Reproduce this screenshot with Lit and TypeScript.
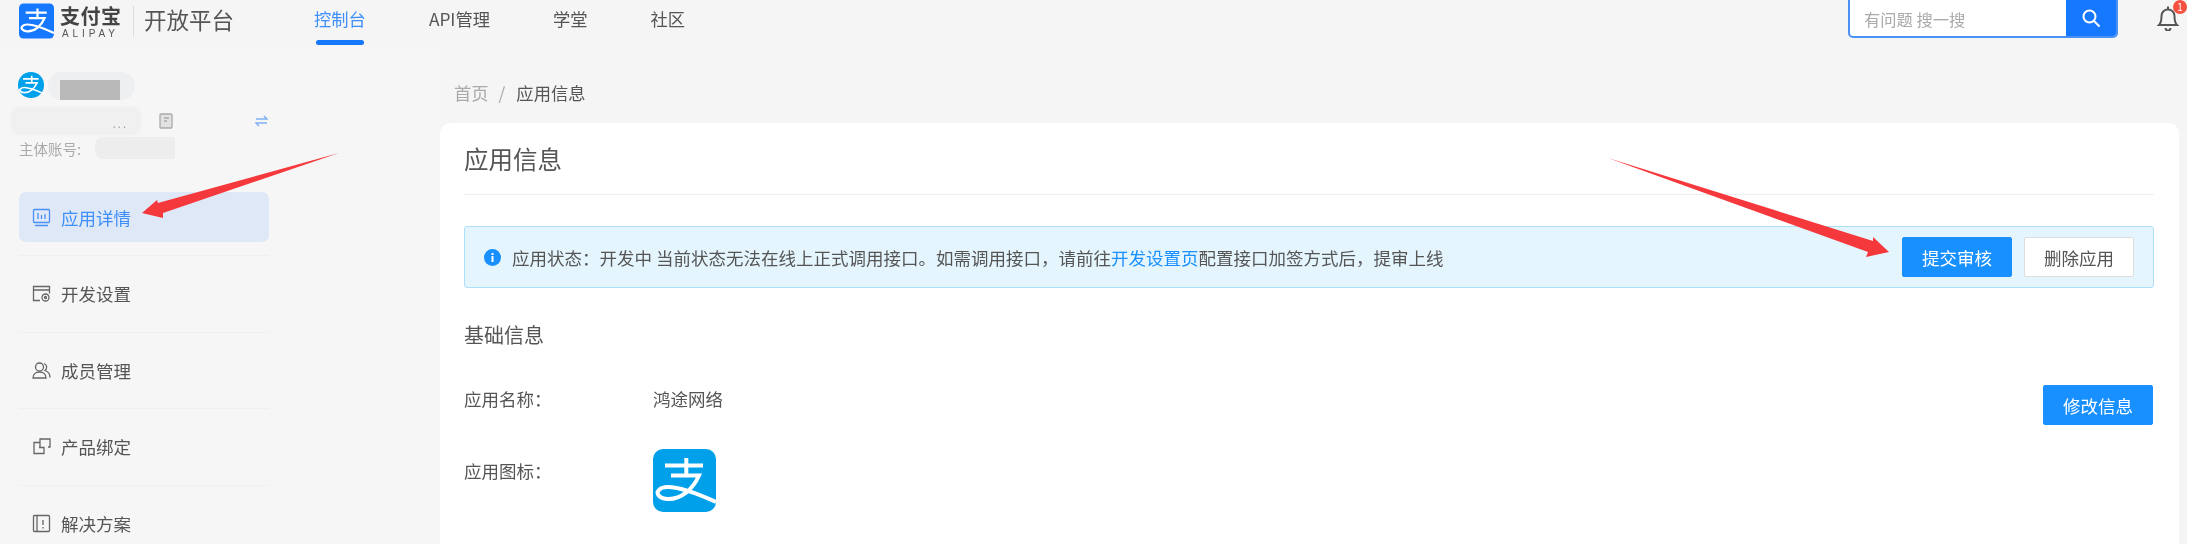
import { LitElement, html, css, svg } from "lit";
import { customElement } from "lit/decorators.js";

const zhi = (bg: string, fg = "#fff", r = 10) => html`<svg viewBox="0 0 63 63" class="fill">
  <rect width="63" height="63" rx="${r}" fill="${bg}"></rect>
  <path d="M33.3 9V26M12 16.5H50M18 26.5H46C40 40 28 51 14 50C5 49 3 44 6 41C11 35 30 38 63 53" fill="none" stroke="${fg}" stroke-width="4"></path>
</svg>`;

const icons: Record<string, unknown> = {
  detail: svg`<rect x="1.5" y="1.5" width="16" height="13" rx="1"/><path d="M6 5v6M9.5 7v4M13 6v5M3 17.5h13"/>`,
  dev: svg`<path d="M8 16.5H1.5v-14h16v7M1.5 6h16"/><circle cx="13.5" cy="13.5" r="3.5"/><circle cx="13.5" cy="13.5" r="1"/>`,
  member: svg`<circle cx="7.5" cy="6" r="4"/><path d="M1 17c0-4 3-6 6.5-6s6.5 2 6.5 6zM12 2.5a4 4 0 0 1 1 7c3 1 5 3.5 5 7"/>`,
  product: svg`<path d="M8 5.5H2v11h10v-6H7M8 10V2h10v8h-2"/>`,
  solution: svg`<rect x="1.5" y="1.5" width="16" height="16" rx="1"/><path d="M5 1.5v16M11 6v5M11 13v1.5"/>`,
};

const menu = [
  ["detail", "应用详情"],
  ["dev", "开发设置"],
  ["member", "成员管理"],
  ["product", "产品绑定"],
  ["solution", "解决方案"],
];

@customElement("app-root")
export class AppRoot extends LitElement {
  static styles = css`
    :host {
      display: block;
      height: 544px;
      overflow: hidden;
      position: relative;
      background: #f5f5f5;
      font-family: "Noto Sans CJK SC", "Liberation Sans", sans-serif;
      font-size: 17.5px;
      color: #555;
    }
    .page { filter: blur(0.55px); height: 544px; display: flex; flex-direction: column; }
    .fill { display: block; width: 100%; height: 100%; }

    .header { height: 46px; flex: none; display: flex; align-items: flex-start; padding-left: 19px; }
    .logo { width: 35px; height: 36px; margin-top: 3px; flex: none; }
    .wordmark { width: 62px; margin: 4px 0 0 6px; flex: none; }
    .wordmark b { display: block; font-size: 20px; line-height: 24px; color: #444; letter-spacing: 0.5px; white-space: nowrap; }
    .wordmark span { display: block; font: 400 10px/11px "Liberation Sans", sans-serif; letter-spacing: 3.9px; margin-left: 2px; color: #555; white-space: nowrap; }
    .vr { width: 1px; height: 31px; background: #ddd; margin: 6px 10px 0 11px; flex: none; }
    .brand { font-size: 22.5px; line-height: 38px; color: #555; flex: none; white-space: nowrap; }
    .nav { display: flex; gap: 63px; margin-left: 80px; flex: none; }
    .nav-item { line-height: 37px; color: #555; font-size: 17.3px; white-space: nowrap; }
    .nav-item.on { color: #3e8ff7; }
    .nav-item.on::after { content: ""; display: block; height: 5px; margin: 3px 2px 0; border-radius: 3px; background: #1677ff; }
    .search { margin: -4px 0 0 auto; width: 270px; height: 42px; flex: none; display: flex; box-sizing: border-box; border: 2px solid #4a90f5; border-radius: 5px; background: #fff; overflow: hidden; }
    .search span { flex: 1; padding: 4px 0 0 14px; line-height: 34px; color: #aaa; font-size: 16.3px; }
    .search i { width: 50px; background: #1677ff; display: flex; align-items: center; justify-content: center; padding-top: 2px; }
    .search svg { width: 20px; height: 20px; }
    .bell { position: relative; width: 69px; flex: none; }
    .bell svg { width: 22px; height: 26px; margin: 5px 0 0 39px; display: block; }
    .badge { position: absolute; left: 55px; top: 0; width: 14px; height: 14px; border-radius: 50%; background: #f5503f; color: #fff; font-size: 10px; line-height: 14px; text-align: center; }

    .body { flex: 1; display: flex; min-height: 0; }
    .side { width: 440px; flex: none; box-sizing: border-box; padding: 26px 0 0 19px; background: #f6f6f6; }
    .acct1 { display: flex; height: 26px; align-items: flex-start; }
    .avatar { width: 26px; height: 26px; margin-left: -1px; flex: none; }
    .blur-name { width: 87px; height: 28px; margin-left: 4px; padding-left: 12px; box-sizing: border-box; border-radius: 14px; background: #eeeff1; flex: none; }
    .blur-name div { width: 60px; height: 20px; margin-top: 8px; background: #b9b9b9; }
    .acct2 { display: flex; align-items: center; height: 16px; margin-top: 15px; width: 250px; }
    .blur-id { width: 128px; height: 26px; margin-left: -7px; padding-right: 12px; box-sizing: border-box; background: #f0f0f0; border-radius: 6px; box-shadow: 0 0 3px 1px #f0f0f0; text-align: right; line-height: 30px; font-size: 11px; letter-spacing: 2px; color: #999; flex: none; }
    .copy { width: 16px; height: 16px; margin-left: 18px; flex: none; }
    .swap { width: 13px; height: 12px; margin-left: auto; margin-right: 1px; flex: none; }
    .acct3 { display: flex; align-items: center; height: 16px; margin-top: 11px; color: #aaa; font-size: 14.5px; white-space: nowrap; }
    .blur-sub { width: 80px; height: 22px; margin-left: 14px; background: #ededed; border-radius: 8px 0 0 8px; flex: none; }
    .menu { list-style: none; margin: 36px 0 0; padding: 0; width: 250px; }
    .menu li { height: 50px; display: flex; align-items: center; gap: 10px; padding-left: 13px; border-radius: 7px; white-space: nowrap; }
    .menu li svg { width: 19px; height: 19px; fill: none; stroke: #666; stroke-width: 1.3; flex: none; }
    .menu li.on { background: #dfe8f7; color: #3e8ff7; }
    .menu li.on svg { stroke: #4a90f5; }
    .menu hr { border: 0; height: 1px; background: #f0f0f0; margin: 13px 0 12.5px; }

    .main { flex: 1; min-width: 0; padding-right: 8px; }
    .crumb { height: 24px; margin: 34px 0 19px 14px; display: flex; align-items: center; gap: 10px; color: #aaa; font-size: 17.3px; white-space: nowrap; }
    .crumb b { font-weight: 400; color: #555; margin-left: 1px; }
    .card { background: #fff; border-radius: 10px 10px 0 0; padding: 0 25px 0 24px; height: 430px; box-sizing: border-box; overflow: hidden; }
    .title { height: 72px; box-sizing: border-box; padding-top: 13px; line-height: 46px; font-size: 24.5px; border-bottom: 1px solid #eee; color: #555; }
    .alert { margin-top: 31px; height: 62px; box-sizing: border-box; display: flex; align-items: center; background: #e5f5fe; border: 1px solid #aee0fb; border-radius: 3px; padding: 0 19px 0 19px; white-space: nowrap; }
    .info { width: 17px; height: 17px; flex: none; margin-right: 11px; }
    .alert a { color: #1890ff; }
    .btn { flex: none; width: 110px; height: 40px; box-sizing: border-box; display: flex; align-items: center; justify-content: center; border-radius: 2px; white-space: nowrap; border: 1px solid #1890ff; background: #1890ff; color: #fff; }
    .btn.plain { background: #fff; color: #555; border-color: #ddd; margin-left: 12px; }
    .alert .btn:first-of-type { margin-left: auto; }
    .sub { font-size: 20px; line-height: 30px; margin-top: 32px; color: #555; }
    .row { display: flex; align-items: flex-start; position: relative; }
    .row label { width: 189px; flex: none; white-space: nowrap; line-height: 24px; }
    .name { margin-top: 37px; height: 42px; }
    .name .val { line-height: 24px; }
    .name .btn { margin: -2px 1px 0 auto; }
    .icon-row { margin-top: 20px; }
    .icon-row label { margin-top: 10px; }
    .app-icon { width: 63px; height: 63px; }

    .arrows { position: absolute; inset: 0; width: 2187px; height: 544px; pointer-events: none; }
  `;

  render() {
    return html`
      <div class="page">
        <header class="header">
          <div class="logo">${zhi("#1677ff", "#fff", 8)}</div>
          <div class="wordmark"><b>支付宝</b><span>ALIPAY</span></div>
          <div class="vr"></div>
          <div class="brand">开放平台</div>
          <nav class="nav">
            <div class="nav-item on">控制台</div>
            <div class="nav-item">API管理</div>
            <div class="nav-item">学堂</div>
            <div class="nav-item">社区</div>
          </nav>
          <div class="search">
            <span>有问题 搜一搜</span>
            <i><svg viewBox="0 0 20 20" fill="none" stroke="#fff" stroke-width="2"><circle cx="8.5" cy="8.5" r="6"/><path d="M13 13l5.5 5.5"/></svg></i>
          </div>
          <div class="bell">
            <svg viewBox="0 0 22 26" fill="none" stroke="#555" stroke-width="2"><path d="M2 20c2-2 2.5-4 2.5-9 0-4 3-6.5 6.5-6.5s6.5 2.5 6.5 6.5c0 5 .5 7 2.5 9zM11 1.5v3M8.5 23a2.5 2.5 0 0 0 5 0"/></svg>
            <span class="badge">1</span>
          </div>
        </header>
        <div class="body">
          <aside class="side">
            <div class="acct1">
              <div class="avatar">${zhi("#00a0ea", "#fff", 31)}</div>
              <div class="blur-name"><div></div></div>
            </div>
            <div class="acct2">
              <div class="blur-id">...</div>
              <svg class="copy" viewBox="0 0 16 16" fill="#e2e2e2" stroke="#aaa" stroke-width="1.3"><rect x="2" y="1" width="12" height="14" rx="1"/><path d="M6 5h5M6 8h3" fill="none"/></svg>
              <svg class="swap" viewBox="0 0 13 12" fill="none" stroke="#7fb0f5" stroke-width="1.5"><path d="M1 4h11L9 1M12 8H1l3 3"/></svg>
            </div>
            <div class="acct3">主体账号:<div class="blur-sub"></div></div>
            <ul class="menu">
              ${menu.map(
                ([k, t], i) => html`
                  ${i ? html`<hr />` : ""}
                  <li class=${i === 0 ? "on" : ""}><svg viewBox="0 0 19 19">${icons[k]}</svg>${t}</li>
                `
              )}
            </ul>
          </aside>
          <main class="main">
            <div class="crumb">首页<span>/</span><b>应用信息</b></div>
            <section class="card">
              <div class="title">应用信息</div>
              <div class="alert">
                <svg class="info" viewBox="0 0 17 17"><circle cx="8.5" cy="8.5" r="8.5" fill="#1890ff"/><rect x="7.5" y="7" width="2" height="6" fill="#fff"/><rect x="7.5" y="4" width="2" height="2" fill="#fff"/></svg>
                <span>应用状态：开发中 当前状态无法在线上正式调用接口。如需调用接口，请前往<a>开发设置页</a>配置接口加签方式后，提审上线</span>
                <div class="btn">提交审核</div>
                <div class="btn plain">删除应用</div>
              </div>
              <div class="sub">基础信息</div>
              <div class="row name">
                <label>应用名称：</label><span class="val">鸿途网络</span>
                <div class="btn">修改信息</div>
              </div>
              <div class="row icon-row">
                <label>应用图标：</label>
                <div class="app-icon">${zhi("#00a0ea")}</div>
              </div>
            </section>
          </main>
        </div>
      </div>
      <svg class="arrows" viewBox="0 0 2187 544">
        <polygon fill="#f5383b" points="339,153 163,213 163,218 142,213 157,200 158,203"></polygon>
        <polygon fill="#f5383b" points="1608,158 1873,241 1873,237 1889,252 1866,257 1868,252"></polygon>
      </svg>
    `;
  }
}
